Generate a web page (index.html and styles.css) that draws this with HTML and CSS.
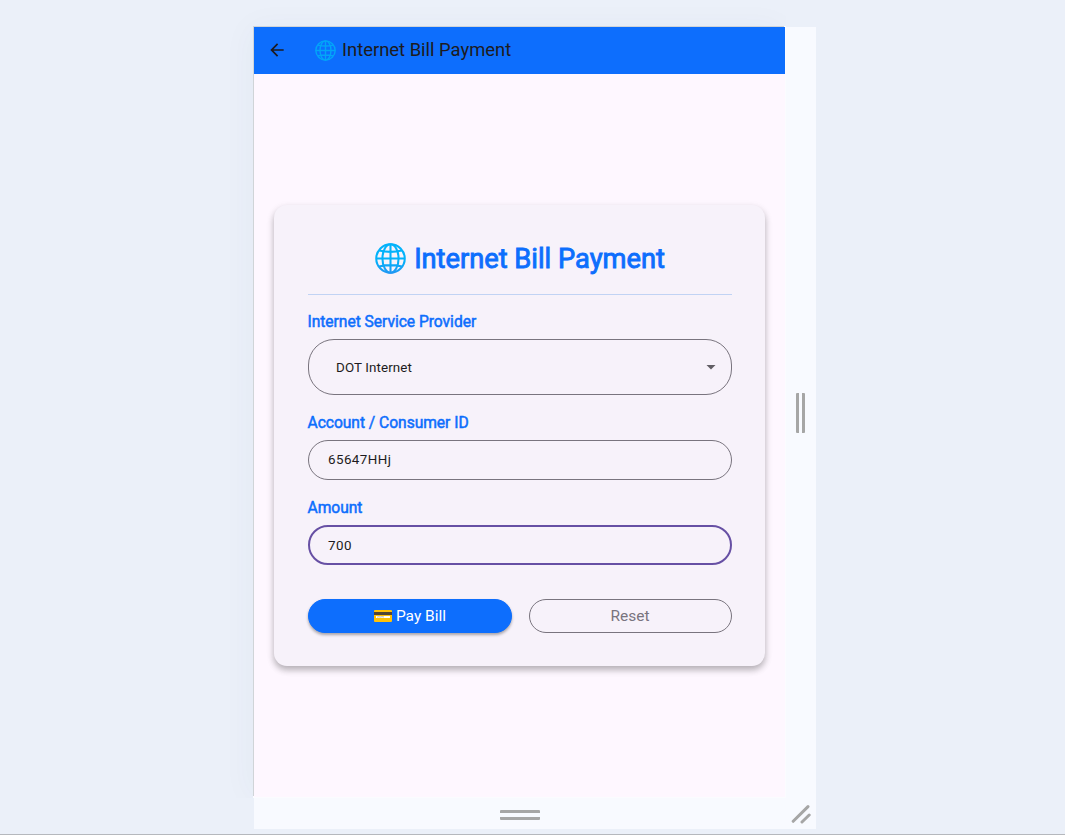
FILE: index.html
```html
<!DOCTYPE html>
<html lang="en">
<head>
<meta charset="utf-8">
<title>Internet Bill Payment</title>
<link rel="stylesheet" href="styles.css">
</head>
<body>
<svg class="defs" width="0" height="0" aria-hidden="true">
  <linearGradient id="sea" x1="0" y1="0" x2="0" y2="30" gradientUnits="userSpaceOnUse"><stop offset=".55" stop-color="#03b2fa"/><stop offset="1" stop-color="#2196f3"/></linearGradient>
  <symbol id="globe" viewBox="0 0 30 30">
    <g fill="none" stroke-width="2">
      <circle cx="15" cy="15" r="13.8"/>
      <ellipse cx="15" cy="15" rx="7.8" ry="13.8"/>
      <path d="M15 1v28M1 15h28M4 7.3q11 2.6 22 0M4 22.7q11-2.6 22 0"/>
    </g>
  </symbol>
</svg>
<div class="device">
  <div class="screen">
    <header class="appbar">
      <svg class="back" viewBox="0 0 24 24"><path d="M20 11H7.8l5.6-5.6L12 4l-8 8 8 8 1.4-1.4L7.8 13H20z"/></svg>
      <svg class="globe"><use href="#globe"/></svg>
      <span class="appbar-title">Internet Bill Payment</span>
    </header>
    <main class="content">
      <form class="card">
        <h1 class="heading"><svg class="globe globe-large"><use href="#globe"/></svg><span>Internet Bill Payment</span></h1>
        <div class="label">Internet Service Provider</div>
        <div class="field select"><span>DOT Internet</span><svg class="caret" viewBox="0 0 10 5"><path d="M.5 0h9L5 4.6z"/></svg></div>
        <div class="label">Account / Consumer ID</div>
        <div class="field">65647HHj</div>
        <div class="label">Amount</div>
        <div class="field focused">700</div>
        <div class="actions">
          <div class="button primary">
            <svg class="credit" viewBox="0 0 18 12"><rect width="18" height="12" rx="1" fill="#ffc107"/><path fill="#504536" d="M0 2h18v3H0z"/><path fill="#fff" d="M2 6h14v2H2z"/><path fill="none" stroke="#9a9277" stroke-width=".6" d="M3 7.2l2-.5 1 .4 2-.4 2 .3"/></svg>
            <span>Pay Bill</span>
          </div>
          <div class="button outline">Reset</div>
        </div>
      </form>
    </main>
  </div>
  <div class="grip side"></div>
  <div class="grip bottom"></div>
  <svg class="corner" viewBox="0 0 20 20"><path d="M2.2 17.3L17 2.6M11 18L18.2 11"/></svg>
</div>
</body>
</html>
```
FILE: styles.css
```css
* { box-sizing: border-box; }
body {
  margin: 0;
  height: 835px;
  padding: 27px 0 0 254px;
  overflow: hidden;
  background: #ebf0f9;
  border-bottom: 1px solid #b5b8bd;
  font-family: Roboto, sans-serif;
  color: #1d1b20;
}
.defs { position: absolute; }
.device {
  width: 562px;
  height: 802px;
  display: grid;
  grid-template: 771px 31px / 532px 30px;
  background: #f8faff;
}
.screen {
  display: flex;
  flex-direction: column;
  width: 531px;
  height: 770px;
  background: #fef7ff;
  box-shadow: -1px -1px 0 #d0d4d8, 0 0 0 1px #fbfcff, -4px 0 30px rgba(50,70,95,.04);
  clip-path: inset(-27px -1px -1px -50px);
}
.appbar {
  flex: none;
  height: 47px;
  display: flex;
  align-items: center;
  padding-left: 13px;
  background: #0d6efd;
}
.back { width: 20px; height: 20px; fill: #1d1b20; margin: 0 28px 1px 0; }
.globe { width: 21px; height: 21px; margin-bottom: 1px; stroke: #03a5f8; }
.appbar-title { margin: 0 0 2px 6px; font-size: 18.4px; line-height: 24px; }
.content { flex: 1; display: flex; flex-direction: column; padding: 131px 20px 0; }
.card {
  width: 491px;
  height: 461px;
  padding: 33px 33.5px 0 33.5px;
  border-radius: 13px;
  background: #f7f2fa;
  box-shadow: 0 4px 6px rgba(0,0,0,.22), 0 3px 9px rgba(0,0,0,.1);
}
.heading {
  display: flex;
  justify-content: center;
  align-items: center;
  height: 57px;
  margin: 0 0 17px;
  padding: 0 0 15px 1px;
  border-bottom: 1px solid #c1d3f4;
  color: #0d6efd;
  font-size: 27.25px;
  font-weight: 400;
  -webkit-text-stroke: .9px #0d6efd;
}
.globe-large { width: 31px; height: 31px; margin: 0 8px 0 0; stroke: url(#sea); }
.label { height: 19px; margin-bottom: 8px; color: #0d6efd; font-size: 15.6px; letter-spacing: -.03px; line-height: 21px; -webkit-text-stroke: .5px #0d6efd; }
.field {
  display: flex;
  align-items: center;
  height: 40px;
  margin-bottom: 18px;
  padding: 0 20px 1px 19.5px;
  border: 1px solid #79747e;
  border-radius: 20px;
  font-size: 13.4px;
  letter-spacing: .42px;
}
.select { justify-content: space-between; height: 56px; padding: 1px 14.5px 0 27.5px; border-radius: 26px; letter-spacing: .1px; }
.caret { width: 10px; height: 5px; fill: #615e64; margin-bottom: 1px; }
.focused { border: 2px solid #6750a4; padding: 0 18.5px; margin-bottom: 34px; }
.actions { display: flex; gap: 17px; }
.button {
  flex: 1 1 0;
  display: flex;
  align-items: center;
  justify-content: center;
  height: 34px;
  border: 1px solid #0d6efd;
  border-radius: 17px;
  font-size: 15.5px;
}
.primary { gap: 4px; padding-left: 1px; background: #0d6efd; color: #fff; box-shadow: 0 2px 3px rgba(0,0,0,.32); }
.credit { width: 18px; height: 12px; }
.outline { border-color: #79747e; color: #79747e; }
.grip { place-self: center; }
.side { margin-right: 2px; width: 9px; height: 40px; background: linear-gradient(90deg, #a6a6a6 3px, transparent 3px 6px, #a6a6a6 6px); border-radius: 1px; }
.bottom { margin: 2px 1px 0 0; width: 40px; height: 10px; background: linear-gradient(#a6a6a6 3px, transparent 3px 7px, #a6a6a6 7px); border-radius: 1px; }
.corner { place-self: center; width: 20px; height: 20px; fill: none; stroke: #a6a6a6; stroke-width: 3; stroke-linecap: round; }
```
